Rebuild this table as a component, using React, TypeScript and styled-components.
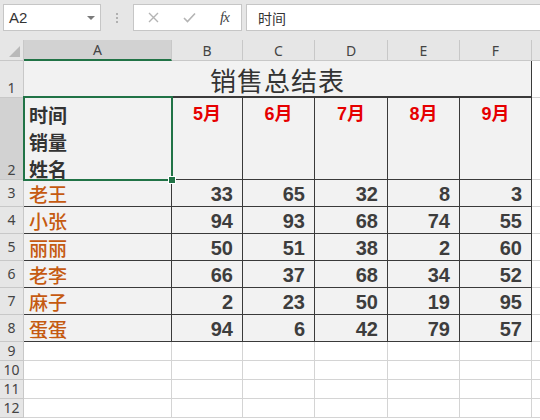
import React from "react";
import styled, { createGlobalStyle } from "styled-components";

const Global = createGlobalStyle`
  html, body { margin: 0; padding: 0; background: #ffffff; }
  body { font-family: "Liberation Sans", "Noto Sans CJK SC", sans-serif; width: 540px; height: 420px; overflow: hidden; }
`;

const Page = styled.div`
  width: 540px;
  height: 420px;
  display: flex;
  flex-direction: column;
  overflow: hidden;
`;

const Toolbar = styled.div`
  height: 40px;
  box-sizing: border-box;
  background: #e6e6e6;
  display: flex;
  align-items: flex-start;
  padding: 4px 0 0 3px;
`;

const Box = styled.div<{ $w?: number; $grow?: boolean }>`
  height: 27px;
  box-sizing: border-box;
  background: #ffffff;
  border: 1px solid #c6c6c6;
  display: flex;
  align-items: center;
  ${(p) => (p.$w ? `width: ${p.$w}px;` : "")}
  ${(p) => (p.$grow ? "flex: 1;" : "")}
`;

const NameBox = styled(Box)`
  justify-content: space-between;
  padding: 0 4px 0 5px;
  font-size: 15px;
  color: #333;
`;

const Caret = styled.span`
  width: 0;
  height: 0;
  border-left: 4px solid transparent;
  border-right: 4px solid transparent;
  border-top: 4px solid #7a7a7a;
  margin-right: 1px;
`;

const Dots = styled.div`
  width: 32px;
  height: 27px;
  display: flex;
  flex-direction: column;
  align-items: center;
  justify-content: center;
  gap: 2px;
  & > span { width: 2px; height: 2px; background: #b0b0b0; }
`;

const FuncBox = styled(Box)`
  padding: 0 0 0 12px;
  margin-right: 4px;
`;

const IconSlot = styled.span<{ $w: number }>`
  width: ${(p) => p.$w}px;
  display: flex;
  align-items: center;
  justify-content: center;
`;

const Fx = styled.span`
  font-family: "Liberation Serif", serif;
  font-style: italic;
  font-size: 15px;
  color: #444;
  letter-spacing: -1px;
`;

const FormulaBox = styled(Box)`
  border-right: none;
  padding-left: 11px;
  font-family: "Noto Sans CJK SC", sans-serif;
  font-size: 14px;
  color: #333;
`;

const Sheet = styled.div`
  display: grid;
  grid-template-columns: 24px 148px 71px 72px 73px 72px 72px 1fr;
  grid-template-rows: 21px 37px 82px repeat(6, 27px) repeat(4, 19px);
  background: #ffffff;
`;

const Corner = styled.div`
  background: #e6e6e6;
  border-right: 1px solid #c8c8c8;
  border-bottom: 1px solid #c8c8c8;
  position: relative;
  &::after {
    content: "";
    position: absolute;
    right: 3px;
    bottom: 3px;
    width: 0;
    height: 0;
    border-left: 11px solid transparent;
    border-bottom: 11px solid #b9b9b9;
  }
`;

const ColHead = styled.div<{ $sel?: boolean }>`
  background: ${(p) => (p.$sel ? "#d2d2d2" : "#e6e6e6")};
  border-right: 1px solid #c8c8c8;
  border-bottom: ${(p) => (p.$sel ? "2px solid #217346" : "1px solid #c8c8c8")};
  box-sizing: border-box;
  display: flex;
  align-items: center;
  justify-content: center;
  font-family: "Noto Sans", sans-serif;
  font-size: 14px;
  line-height: 16px;
  color: #444;
  padding-top: 1px;
`;

const RowHead = styled.div<{ $sel?: boolean; $bottom?: boolean }>`
  background: ${(p) => (p.$sel ? "#d2d2d2" : "#e6e6e6")};
  border-right: 1px solid #c8c8c8;
  border-bottom: 1px solid #c8c8c8;
  box-sizing: border-box;
  display: flex;
  justify-content: center;
  align-items: ${(p) => (p.$bottom ? "flex-end" : "center")};
  font-family: "Noto Sans", sans-serif;
  font-size: 14px;
  line-height: 18px;
  color: #444;
`;

const Cell = styled.div<{ $table?: boolean; $right?: boolean; $thick?: boolean }>`
  box-sizing: border-box;
  background: ${(p) => (p.$table ? "#f2f2f2" : "#ffffff")};
  border-right: 1px solid ${(p) => (p.$table ? "#3a3a3a" : "#d4d4d4")};
  border-bottom: ${(p) => (p.$thick ? "2px" : "1px")} solid ${(p) => (p.$table ? "#3a3a3a" : "#d4d4d4")};
  display: flex;
  align-items: center;
  justify-content: ${(p) => (p.$right ? "flex-end" : "flex-start")};
  padding: 0 9px 0 5px;
  min-width: 0;
`;

const TitleCell = styled(Cell)`
  grid-column: span 6;
  justify-content: center;
  padding: 3px 0 0 0;
  font-family: "Noto Sans CJK SC", sans-serif;
  font-size: 26px;
  line-height: 28px;
  letter-spacing: 1px;
  color: #333;
`;

const HeadCell = styled(Cell)`
  position: relative;
  flex-direction: column;
  align-items: flex-start;
  justify-content: flex-start;
  padding: 3px 0 0 5px;
  font-family: "Noto Sans CJK SC", sans-serif;
  font-weight: 700;
  font-size: 19px;
  line-height: 27px;
  color: #333;
  &::after {
    content: "";
    position: absolute;
    left: -1px;
    top: -2px;
    right: -2px;
    bottom: -2px;
    border: 2px solid #217346;
    pointer-events: none;
  }
`;

const Handle = styled.span`
  position: absolute;
  right: -5px;
  bottom: -5px;
  width: 6px;
  height: 6px;
  background: #217346;
  border: 1px solid #ffffff;
  z-index: 2;
`;

const MonthCell = styled(Cell)`
  display: block;
  text-align: center;
  padding: 3px 0 0 0;
  font-family: "Liberation Sans", "Noto Sans CJK SC", sans-serif;
  font-weight: 700;
  font-size: 18px;
  line-height: 26px;
  color: #e60000;
`;

const NameCell = styled(Cell)`
  font-family: "Noto Sans CJK SC", sans-serif;
  font-weight: 500;
  font-size: 19px;
  color: #c55a11;
  padding-left: 5px;
  padding-top: 1px;
`;

const NumCell = styled(Cell)`
  font-weight: 700;
  font-size: 20px;
  color: #3d3d3d;
  padding-top: 2px;
`;

const cols = ["A", "B", "C", "D", "E", "F", ""];
const months = ["5月", "6月", "7月", "8月", "9月"];
const data: [string, number[]][] = [
  ["老王", [33, 65, 32, 8, 3]],
  ["小张", [94, 93, 68, 74, 55]],
  ["丽丽", [50, 51, 38, 2, 60]],
  ["老李", [66, 37, 68, 34, 52]],
  ["麻子", [2, 23, 50, 19, 95]],
  ["蛋蛋", [94, 6, 42, 79, 57]],
];

export default function App() {
  return (
    <Page>
      <Global />
      <Toolbar>
        <NameBox $w={98}>
          <span>A2</span>
          <Caret />
        </NameBox>
        <Dots>
          <span />
          <span />
          <span />
        </Dots>
        <FuncBox $w={109}>
          <IconSlot $w={14}>
            <svg width="11" height="11" viewBox="0 0 11 11">
              <path d="M1 1 L10 10 M10 1 L1 10" stroke="#b4b4b4" strokeWidth="1.4" fill="none" />
            </svg>
          </IconSlot>
          <IconSlot $w={22} />
          <IconSlot $w={14}>
            <svg width="13" height="11" viewBox="0 0 13 11">
              <path d="M1 6 L4.5 9.5 L12 1.5" stroke="#b4b4b4" strokeWidth="1.6" fill="none" />
            </svg>
          </IconSlot>
          <IconSlot $w={24} />
          <Fx>fx</Fx>
        </FuncBox>
        <FormulaBox $grow>时间</FormulaBox>
      </Toolbar>
      <Sheet>
        <Corner />
        {cols.map((c, i) => (
          <ColHead key={i} $sel={c === "A"}>
            {c}
          </ColHead>
        ))}

        <RowHead $bottom>1</RowHead>
        <TitleCell $table $thick>销售总结表</TitleCell>
        <Cell />

        <RowHead $bottom $sel>2</RowHead>
        <HeadCell $table>
          <span>时间</span>
          <span>销量</span>
          <span>姓名</span>
          <Handle />
        </HeadCell>
        {months.map((m) => (
          <MonthCell key={m} $table>
            {m}
          </MonthCell>
        ))}
        <Cell />

        {data.map(([name, nums], r) => (
          <React.Fragment key={name}>
            <RowHead>{r + 3}</RowHead>
            <NameCell $table>{name}</NameCell>
            {nums.map((n, i) => (
              <NumCell key={i} $table $right>
                {n}
              </NumCell>
            ))}
            <Cell />
          </React.Fragment>
        ))}

        {[9, 10, 11, 12].map((n) => (
          <React.Fragment key={n}>
            <RowHead>{n}</RowHead>
            {cols.map((_, i) => (
              <Cell key={i} />
            ))}
          </React.Fragment>
        ))}
      </Sheet>
    </Page>
  );
}
